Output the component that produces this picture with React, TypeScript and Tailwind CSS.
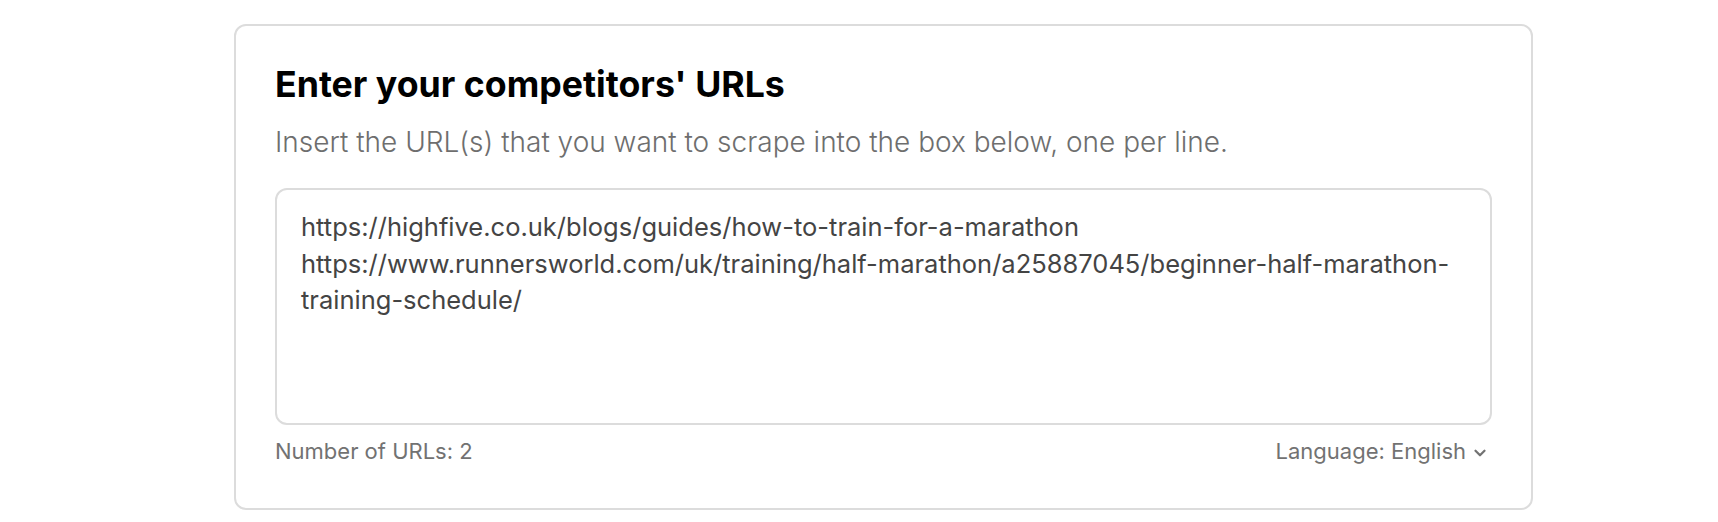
import { ChevronDown } from 'lucide-react';

const URLS = [
  'https://highfive.co.uk/blogs/guides/how-to-train-for-a-marathon',
  'https://www.runnersworld.com/uk/training/half-marathon/a25887045/beginner-half-marathon-training-schedule/',
];

export default function App() {
  return (
    <div className="min-h-[522px] bg-white pt-[24px] font-['Inter',sans-serif]">
      <div className="ml-[234px] w-[1299px] rounded-[12px] border-2 border-[#dcdcdc] px-[39px] pt-[36px] pb-[43px]">
        {/* Heading */}
        <h2 className="text-[35.7px] leading-[44px] font-bold text-black">
          Enter your competitors' URLs
        </h2>
        <p className="mt-[18px] text-[28px] leading-[36px] font-light text-[#6e6e6e]">
          Insert the URL(s) that you want to scrape into the box below, one per line.
        </p>

        {/* URL box */}
        <textarea
          defaultValue={URLS.join('\n')}
          className="mt-[28px] block h-[237px] w-full resize-none rounded-[12px] border-2 border-[#dcdcdc] px-[24px] pt-[19px] pb-[16px] text-[25.5px] leading-[36.5px] text-[#444444] outline-none"
        />

        {/* Footer */}
        <div className="mt-[12px] flex items-center justify-between text-[22px] leading-[28px] text-[#727272]">
          <span>Number of URLs: {URLS.length}</span>
          <button className="flex items-center gap-[5px] pr-[3px]">
            Language: English
            <ChevronDown className="mt-[3px] h-[18px] w-[18px]" strokeWidth={3} />
          </button>
        </div>
      </div>
    </div>
  );
}
